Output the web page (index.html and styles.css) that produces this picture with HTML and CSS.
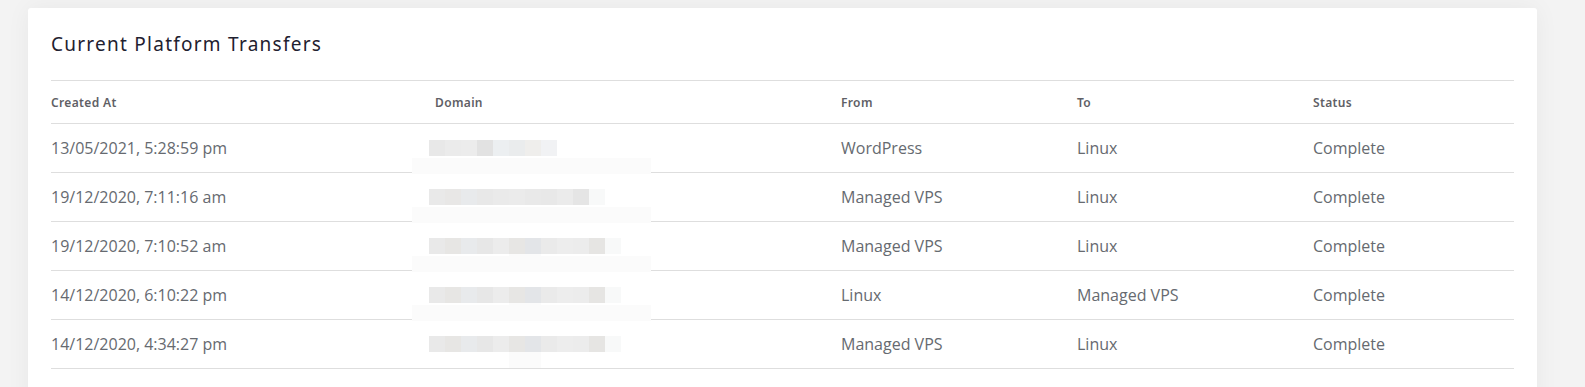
FILE: index.html
```html
<!DOCTYPE html>
<html lang="en">
<head>
<meta charset="utf-8">
<title>Current Platform Transfers</title>
<link rel="stylesheet" href="styles.css">
</head>
<body>
<div class="page">
  <section class="card">
    <h2 class="card-title">Current Platform Transfers</h2>
    <table class="transfers">
      <colgroup>
        <col class="c-created">
        <col class="c-domain">
        <col class="c-from">
        <col class="c-to">
        <col class="c-status">
      </colgroup>
      <thead>
        <tr>
          <th>Created At</th>
          <th>Domain</th>
          <th>From</th>
          <th>To</th>
          <th>Status</th>
        </tr>
      </thead>
      <tbody>
        <tr>
          <td>13/05/2021, 5:28:59 pm</td>
          <td class="domain">
            <div class="blur">
              <span class="px p1"></span><span class="px p2"></span><span class="px p3"></span><span class="px p4"></span><span class="px p5"></span><span class="px p6"></span><span class="px p7"></span><span class="px p8"></span>
            </div>
            <span class="veil"></span>
          </td>
          <td>WordPress</td>
          <td>Linux</td>
          <td>Complete</td>
        </tr>
        <tr>
          <td>19/12/2020, 7:11:16 am</td>
          <td class="domain">
            <div class="blur">
              <span class="px q1"></span><span class="px q2"></span><span class="px q3"></span><span class="px q4"></span><span class="px q5"></span><span class="px q6"></span><span class="px q7"></span><span class="px q8"></span><span class="px q9"></span><span class="px q10"></span><span class="px faint"></span>
            </div>
            <span class="veil"></span>
          </td>
          <td>Managed VPS</td>
          <td>Linux</td>
          <td>Complete</td>
        </tr>
        <tr>
          <td>19/12/2020, 7:10:52 am</td>
          <td class="domain">
            <div class="blur">
              <span class="px r1"></span><span class="px r2"></span><span class="px r3"></span><span class="px r4"></span><span class="px r5"></span><span class="px r6"></span><span class="px r7"></span><span class="px r8"></span><span class="px r9"></span><span class="px r10"></span><span class="px r11"></span><span class="px faint"></span>
            </div>
            <span class="tail"></span>
            <span class="veil"></span>
          </td>
          <td>Managed VPS</td>
          <td>Linux</td>
          <td>Complete</td>
        </tr>
        <tr>
          <td>14/12/2020, 6:10:22 pm</td>
          <td class="domain">
            <div class="blur">
              <span class="px r1"></span><span class="px r2"></span><span class="px r3"></span><span class="px r4"></span><span class="px r5"></span><span class="px r6"></span><span class="px r7"></span><span class="px r8"></span><span class="px r9"></span><span class="px r10"></span><span class="px r11"></span><span class="px faint"></span>
            </div>
            <span class="tail"></span>
            <span class="veil"></span>
          </td>
          <td>Linux</td>
          <td>Managed VPS</td>
          <td>Complete</td>
        </tr>
        <tr>
          <td>14/12/2020, 4:34:27 pm</td>
          <td class="domain">
            <div class="blur">
              <span class="px r1"></span><span class="px r2"></span><span class="px r3"></span><span class="px r4"></span><span class="px r5"></span><span class="px r6"></span><span class="px r7"></span><span class="px r8"></span><span class="px r9"></span><span class="px r10"></span><span class="px r11"></span><span class="px faint"></span>
            </div>
            <span class="tail"></span>
          </td>
          <td>Managed VPS</td>
          <td>Linux</td>
          <td>Complete</td>
        </tr>
      </tbody>
    </table>
  </section>
</div>
</body>
</html>
```

FILE: styles.css
```css
html, body {
  margin: 0;
  padding: 0;
}

body {
  background: #f3f3f3;
  font-family: "Open Sans", "Noto Sans", sans-serif;
  color: #666;
  overflow: hidden;
}

.page {
  padding: 8px 48px 0 28px;
}

.card {
  background: #fff;
  border-radius: 3px;
  box-shadow: 0 0 24px rgba(0, 0, 0, 0.05);
  padding: 24px 23px 40px 23px;
}

.card-title {
  margin: 0 0 24px 0;
  font-family: "Noto Sans", "Open Sans", sans-serif;
  font-weight: 400;
  font-size: 19px;
  line-height: 24px;
  color: #1f2130;
  letter-spacing: 1.25px;
}

.transfers {
  width: 100%;
  border-collapse: collapse;
  table-layout: fixed;
}

.c-created { width: 384px; }
.c-domain { width: 406px; }
.c-from { width: 236px; }
.c-to { width: 236px; }
.c-status { width: 201px; }

.transfers th {
  text-align: left;
  font-family: "Noto Sans", "Open Sans", sans-serif;
  font-weight: 600;
  font-size: 12px;
  letter-spacing: 0.35px;
  color: #5f5f66;
  height: 42px;
  padding: 0;
  border-top: 1px solid #dedede;
  border-bottom: 1px solid #dedede;
}

.transfers td {
  height: 48px;
  padding: 0;
  font-size: 16px;
  color: #666a70;
  border-bottom: 1px solid #dedede;
  vertical-align: middle;
  white-space: nowrap;
}

.transfers td.domain {
  position: relative;
}

.blur {
  display: flex;
  margin-left: -6px;
}

.px {
  display: block;
  width: 16px;
  height: 16px;
}

.tail {
  position: absolute;
  left: 74px;
  top: 32px;
  width: 32px;
  height: 16px;
  background: #fbfbfb;
}

.veil {
  position: absolute;
  left: -23px;
  bottom: -2px;
  width: 239px;
  height: 16px;
  background: #fbfbfb;
  z-index: 1;
}

.p1 { background: #e8e8e8; }
.p2 { background: #ebebeb; }
.p3 { background: #ececec; }
.p4 { background: #e2e2e2; }
.p5 { background: #eceff1; }
.p6 { background: #eaeced; }
.p7 { background: #efeeec; }
.p8 { background: #f1f2f4; }

.q1 { background: #e9e9e9; }
.q2 { background: #e8e7e6; }
.q3 { background: #e8eaec; }
.q4 { background: #e8e8e8; }
.q5 { background: #eaeaea; }
.q6 { background: #ebebeb; }
.q7 { background: #e9e9e9; }
.q8 { background: #e8e8e8; }
.q9 { background: #ebebeb; }
.q10 { background: #e5e5e5; }

.r1 { background: #e9e9e9; }
.r2 { background: #e7e6e4; }
.r3 { background: #e8eaec; }
.r4 { background: #e7e7e7; }
.r5 { background: #ececec; }
.r6 { background: #e7e6e4; }
.r7 { background: #e3e5e8; }
.r8 { background: #eaeaea; }
.r9 { background: #ededed; }
.r10 { background: #ececec; }
.r11 { background: #e6e5e3; }

.faint { background: #f8f9f9; }
```
